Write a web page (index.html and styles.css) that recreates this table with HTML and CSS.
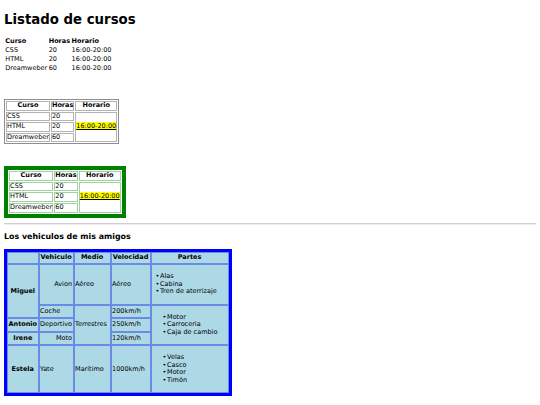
FILE: index.html
```html
<!DOCTYPE html>
<html lang="es">
<head>
<meta charset="utf-8">
<title>Listado de cursos</title>
<link rel="stylesheet" href="styles.css">
</head>
<body>
<h1 class="title">Listado de cursos</h1>

<table class="plain">
  <tr><th>Curso</th><th>Horas</th><th>Horario</th></tr>
  <tr><td>CSS</td><td>20</td><td>16:00-20:00</td></tr>
  <tr><td>HTML</td><td>20</td><td>16:00-20:00</td></tr>
  <tr><td>Dreamweber</td><td>60</td><td>16:00-20:00</td></tr>
</table>

<table class="gray">
  <tr><th>Curso</th><th>Horas</th><th>Horario</th></tr>
  <tr><td>CSS</td><td>20</td><td rowspan="3"><span class="hl">16:00-20:00</span></td></tr>
  <tr><td>HTML</td><td>20</td></tr>
  <tr><td>Dreamweber</td><td>60</td></tr>
</table>

<table class="green">
  <tr><th>Curso</th><th>Horas</th><th>Horario</th></tr>
  <tr><td>CSS</td><td>20</td><td rowspan="3"><span class="hl">16:00-20:00</span></td></tr>
  <tr><td>HTML</td><td>20</td></tr>
  <tr><td>Dreamweber</td><td>60</td></tr>
</table>

<hr class="rule">

<h3 class="subtitle">Los vehiculos de mis amigos</h3>

<table class="blue">
  <tr><th></th><th>Vehiculo</th><th class="medio">Medio</th><th class="velocidad">Velocidad</th><th class="partes">Partes</th></tr>
  <tr>
    <th rowspan="2">Miguel</th>
    <td class="right">Avion</td>
    <td>Aéreo</td>
    <td>Aéreo</td>
    <td><ul class="parts"><li>Alas</li><li>Cabina</li><li>Tren de aterrizaje</li></ul></td>
  </tr>
  <tr>
    <td>Coche</td>
    <td rowspan="3">Terrestres</td>
    <td>200km/h</td>
    <td rowspan="3"><ul class="parts wide"><li>Motor</li><li>Carroceria</li><li>Caja de cambio</li></ul></td>
  </tr>
  <tr>
    <th>Antonio</th>
    <td>Deportivo</td>
    <td>250km/h</td>
  </tr>
  <tr>
    <th>Irene</th>
    <td class="right">Moto</td>
    <td>120km/h</td>
  </tr>
  <tr>
    <th>Estela</th>
    <td>Yate</td>
    <td>Marítimo</td>
    <td>1000km/h</td>
    <td><ul class="parts wide"><li>Velas</li><li>Casco</li><li>Motor</li><li>Timón</li></ul></td>
  </tr>
</table>
</body>
</html>
```
FILE: styles.css
```css
html { background: #fff; }
body {
  margin: 4px;
  font-family: "DejaVu Sans", Verdana, sans-serif;
  font-size: 6.5px;
  line-height: 7.5px;
  color: #000;
}
.title {
  font-size: 13.3px;
  line-height: 15px;
  font-weight: bold;
  margin: 8px 0 10px;
}
table { border-spacing: 1px; }
th, td { padding: 0.25px; }

.plain { margin-bottom: 25px; }
.plain th { text-align: left; }

.gray {
  border: 1px solid #8e8e8e;
  margin-bottom: 22px;
}
.gray th, .gray td {
  border: 1px solid #b4b4b4;
  padding: 0;
}

.hl {
  background: #ffff00;
  text-decoration: underline;
}

.green {
  border: 4px solid #008000;
  background: #fff;
}
.green th, .green td {
  border: 1px solid #9cd49c;
  padding: 0.1px;
}

.rule {
  margin: 5px 0 0;
  border: none;
  border-top: 1px solid #cfcfcf;
  border-bottom: 1px solid #ececec;
}
.subtitle {
  font-size: 7.9px;
  line-height: 9px;
  font-weight: bold;
  margin: 7.5px 0 7.6px;
}

.blue {
  border: 3px solid #0000ff;
  background: #add8e6;
  border-spacing: 0;
}
.blue th, .blue td {
  border: 1px solid #6a8be6;
  padding: 1.5px 0.5px;
}
.blue td { text-align: left; }
.blue td.right { text-align: right; }
.blue th.medio { width: 34px; }
.blue th.velocidad { width: 37px; }
.blue th.partes { width: 75px; }
.parts {
  margin: 6.5px 0;
  padding-left: 8px;
  list-style: none;
}
.parts.wide { padding-left: 15px; }
.parts li::before {
  content: "•";
  display: inline-block;
  width: 4.5px;
  margin-left: -4.5px;
}
```
